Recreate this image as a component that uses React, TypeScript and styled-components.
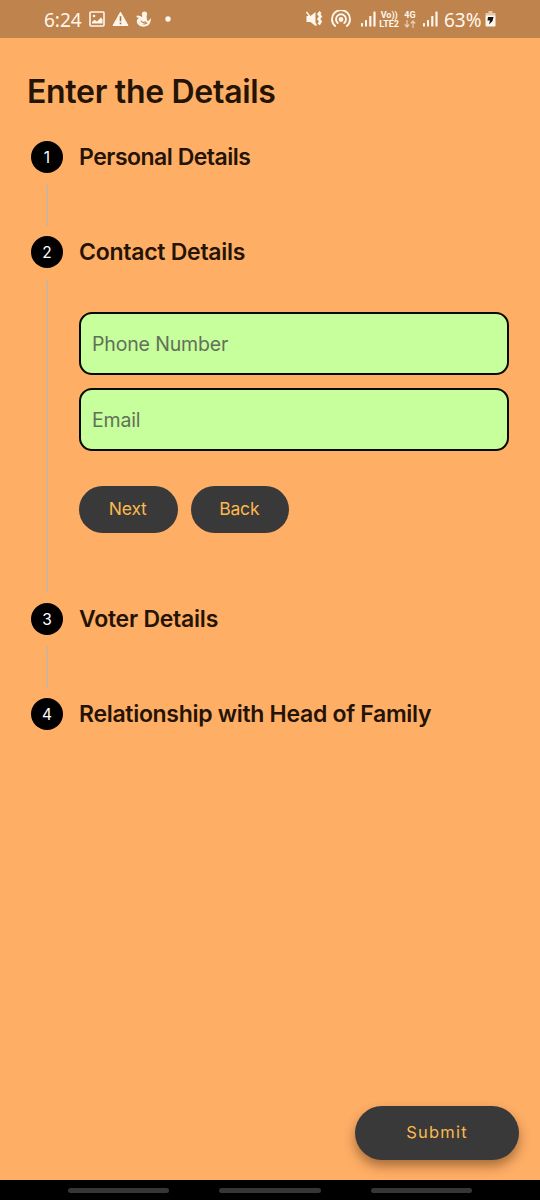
import React from "react";
import styled, { createGlobalStyle } from "styled-components";

const GlobalStyle = createGlobalStyle`
  * { box-sizing: border-box; }
  body { margin: 0; background: #ffae66; }
`;

const Screen = styled.div`
  width: 540px;
  height: 1200px;
  display: flex;
  flex-direction: column;
  background: #ffae66;
  color: #241405;
  font-family: Inter, "Liberation Sans", sans-serif;
  overflow: hidden;
`;

const StatusBar = styled.header`
  height: 38px;
  flex: none;
  display: flex;
  align-items: center;
  justify-content: space-between;
  padding: 0 44px 0 44px;
  background: #bf834d;
  color: #fff6ec;
  font-family: "Noto Sans", sans-serif;
`;

const StatusText = styled.span<{ $width: number }>`
  width: ${(p) => p.$width}px;
  padding-top: 1px;
  font-size: 19px;
  line-height: 38px;
  white-space: nowrap;
`;

const StatusGroup = styled.div`
  display: flex;
  align-items: center;
  height: 38px;
`;

const Glyph = styled.svg<{ $gap?: number }>`
  display: block;
  flex: none;
  margin-left: ${(p) => p.$gap ?? 0}px;
`;

const NetworkLabel = styled.div<{ $gap: number }>`
  margin-left: ${(p) => p.$gap}px;
  display: flex;
  flex-direction: column;
  align-items: center;
  font: 700 9px/9px Roboto, sans-serif;
  height: 17px;
`;

const Main = styled.main`
  flex: 1;
  display: flex;
  flex-direction: column;
  padding: 34px 31px 0 27px;
`;

const Title = styled.h1`
  margin: 0;
  font-size: 32px;
  font-weight: 600;
  line-height: 40px;
  letter-spacing: -0.3px;
  white-space: nowrap;
`;

const Steps = styled.div`
  display: flex;
  flex-direction: column;
  margin: 29px 0 0 4px;
`;

const StepRow = styled.section<{ $height: number }>`
  display: flex;
  gap: 16px;
  height: ${(p) => p.$height}px;
`;

const Rail = styled.div`
  width: 32px;
  flex: none;
  display: flex;
  flex-direction: column;
  align-items: center;
`;

const Badge = styled.div`
  width: 32px;
  height: 32px;
  flex: none;
  padding-top: 1px;
  border-radius: 50%;
  background: #000;
  color: #fff;
  font: 400 15.5px/31px Inter, sans-serif;
  text-align: center;
`;

const Connector = styled.div`
  flex: 1;
  width: 2px;
  margin: 11px 1px 10px 0;
  background: #d6b390;
`;

const StepBody = styled.div`
  flex: 1;
  display: flex;
  flex-direction: column;
`;

const StepTitle = styled.h2<{ $tracking: number }>`
  margin: 0;
  font-size: 23px;
  font-weight: 600;
  line-height: 32px;
  letter-spacing: ${(p) => p.$tracking}px;
  white-space: nowrap;
`;

const Fields = styled.div`
  display: flex;
  flex-direction: column;
  gap: 13px;
  margin-top: 44px;
`;

const Field = styled.input`
  width: 430px;
  height: 63px;
  padding: 2px 11px 0;
  border: 2px solid #080a04;
  border-radius: 13px;
  background: #c6ff9b;
  font-family: inherit;
  font-size: 19.5px;
  letter-spacing: -0.15px;
  outline: none;
  &::placeholder { color: #62705a; opacity: 1; }
`;

const Actions = styled.div`
  display: flex;
  gap: 13px;
  margin-top: 35px;
`;

const PillButton = styled.button`
  width: 98.5px;
  height: 47px;
  padding: 0 1px 2px 0;
  border: 0;
  border-radius: 24px;
  background: #393939;
  color: #fdb84e;
  font-family: inherit;
  font-size: 17.5px;
  letter-spacing: -0.2px;
`;

const SubmitButton = styled(PillButton)`
  width: 164px;
  height: 54px;
  margin: auto -10px 20.5px auto;
  padding: 0 0 2px;
  border-radius: 27px;
  font-size: 16.5px;
  letter-spacing: 1.2px;
  box-shadow: 0 6px 12px rgba(70, 40, 10, 0.48);
`;

const NavBar = styled.footer`
  height: 20px;
  flex: none;
  display: flex;
  justify-content: center;
  gap: 50px;
  padding-top: 8px;
  background: #000;
`;

const NavHandle = styled.div`
  width: 101.5px;
  height: 5px;
  border-radius: 3px;
  background: #363636;
`;

const Signal = ({ gap }: { gap: number }) => (
  <Glyph $gap={gap} width="15" height="16" viewBox="0 0 15 16" fill="currentColor">
    <rect x="0" y="12" width="2" height="3.5" rx=".6" />
    <rect x="4" y="9" width="2" height="6.5" rx=".6" />
    <rect x="8.2" y="5" width="2.2" height="10.5" rx=".6" />
    <rect x="12.4" y="0.5" width="2.2" height="15" rx=".6" />
  </Glyph>
);

type Step = { label: string; height: number; tracking: number; open?: boolean };

const steps: Step[] = [
  { label: "Personal Details", height: 94.5, tracking: -0.5 },
  { label: "Contact Details", height: 367.5, tracking: -0.26, open: true },
  { label: "Voter Details", height: 94.5, tracking: -0.24 },
  { label: "Relationship with Head of Family", height: 32, tracking: -0.3 },
];

export default function App() {
  return (
    <>
      <GlobalStyle />
      <Screen>
        <StatusBar>
          <StatusGroup>
            <StatusText $width={38}>6:24</StatusText>
            <Glyph $gap={7} width="16" height="16" viewBox="0 0 16 16">
              <rect x="1" y="1" width="14" height="14" rx="1" fill="none" stroke="currentColor" strokeWidth="1.6" />
              <path d="M3 12.5V11L5.500 8.700 8 10.500l4-4 1.500 2v4Z" fill="currentColor" />
              <circle cx="5" cy="5" r="1.300" fill="currentColor" />
            </Glyph>
            <Glyph $gap={7} width="17" height="16" viewBox="0 0 17 16">
              <path d="M8.500 1.200 16 14.500H1Z" fill="currentColor" stroke="currentColor" strokeLinejoin="round" />
              <path d="M8.500 5.200v5M8.500 11.600v1.600" stroke="#a96f3d" strokeWidth="1.600" />
            </Glyph>
            <Glyph $gap={7} width="15" height="16" viewBox="0 0 15 16">
              <circle cx="8.500" cy="3" r="2.600" fill="currentColor" />
              <path d="M6.200 4.500h4.300l.5 5-2.500 3H6Z" fill="currentColor" />
              <path d="M4.500 6.300 1.500 5.500M7 7C2.500 6.800.8 9.800 2.500 12.500c2.500 3.400 9.800 3 11-2.300-1 1-2 .8-2.500.3" fill="none" stroke="currentColor" strokeWidth="2" strokeLinecap="round" />
              <path d="M2.500 9.500 6 7l1.500 7-3.500-.5Z" fill="currentColor" />
              <path d="M5 9.500c.2 2.200 3.200 2.500 4.600.8" stroke="#bf834d" strokeWidth="1.100" fill="none" />
            </Glyph>
            <Glyph $gap={14} width="6" height="6" viewBox="0 0 6 6">
              <circle cx="3" cy="3" r="2.700" fill="currentColor" />
            </Glyph>
          </StatusGroup>
          <StatusGroup>
            <Glyph width="17" height="18" viewBox="0 0 17 18">
              <path d="M.5 6h4l5-4v14l-5-4h-4Z" fill="currentColor" />
              <path d="m.5 2 10 13.500" stroke="currentColor" strokeWidth="1.500" />
              <path d="m14.500 2-1.800 2 1.800 2.500L12.700 9l1.800 2.500-1.800 3" fill="none" stroke="currentColor" strokeWidth="2.800" />
            </Glyph>
            <Glyph $gap={8} width="20" height="18" viewBox="0 0 20 18" fill="none" stroke="currentColor" strokeWidth="1.900" strokeLinecap="round">
              <path d="M4.200 16A9 9 0 1 1 15.800 16" />
              <path d="M6.700 13A5 5 0 1 1 13.300 13" />
              <circle cx="10" cy="9.500" r="1.500" fill="currentColor" />
            </Glyph>
            <Signal gap={10} />
            <NetworkLabel $gap={3}>
              <span>Vo))</span>
              <span>LTE2</span>
            </NetworkLabel>
            <NetworkLabel $gap={5}>
              <span>4G</span>
              <Glyph width="12" height="8" viewBox="0 0 12 8" fill="none" stroke="currentColor" strokeWidth="1.200" opacity=".65">
                <path d="M3 0v7M.8 4.500 3 7l2.200-2.500M9 8V1M6.800 3.500 9 1l2.200 2.500" />
              </Glyph>
            </NetworkLabel>
            <Signal gap={7} />
            <Glyph width="6" height="1" />
            <StatusText $width={41}>63%</StatusText>
            <Glyph width="11" height="16" viewBox="0 0 11 16">
              <path d="M3.500 0h4v2h-4Z" fill="currentColor" opacity=".6" />
              <path d="M.5 2h10v3H.5Z" fill="currentColor" opacity=".6" />
              <rect x=".5" y="4.500" width="10" height="11" rx="1" fill="currentColor" />
              <path d="M3 6h5.500L7.500 10 4 13.500l1-4H2.500Z" fill="#17130f" />
            </Glyph>
          </StatusGroup>
        </StatusBar>
        <Main>
          <Title>Enter the Details</Title>
          <Steps>
            {steps.map((step, i) => (
              <StepRow key={step.label} $height={step.height}>
                <Rail>
                  <Badge>{i + 1}</Badge>
                  {i < steps.length - 1 && <Connector />}
                </Rail>
                <StepBody>
                  <StepTitle $tracking={step.tracking}>{step.label}</StepTitle>
                  {step.open && (
                    <>
                      <Fields>
                        <Field placeholder="Phone Number" />
                        <Field placeholder="Email" />
                      </Fields>
                      <Actions>
                        <PillButton>Next</PillButton>
                        <PillButton>Back</PillButton>
                      </Actions>
                    </>
                  )}
                </StepBody>
              </StepRow>
            ))}
          </Steps>
          <SubmitButton>Submit</SubmitButton>
        </Main>
        <NavBar>
          <NavHandle />
          <NavHandle />
          <NavHandle />
        </NavBar>
      </Screen>
    </>
  );
}
